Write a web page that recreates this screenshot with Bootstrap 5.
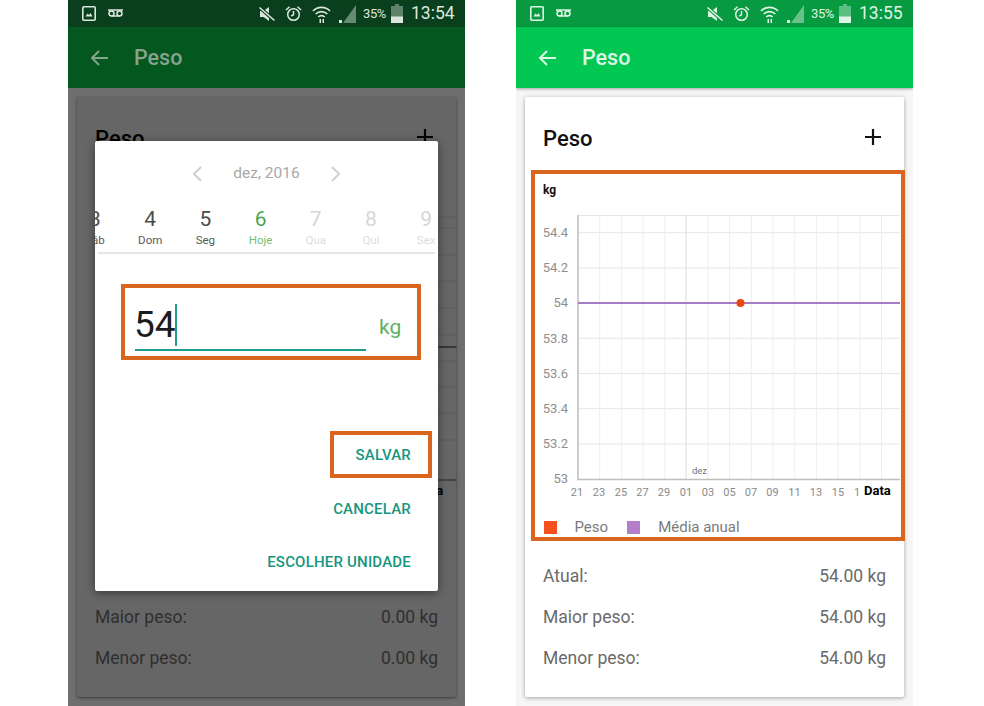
<!DOCTYPE html>
<html lang="pt">
<head>
<meta charset="utf-8">
<title>Peso</title>
<link href="https://cdn.jsdelivr.net/npm/bootstrap@5.3.0/dist/css/bootstrap.min.css" rel="stylesheet">
<style>
html,body{height:706px;overflow:hidden}
body{background:#fff;font-family:Roboto,"Liberation Sans",sans-serif;padding-left:68px;gap:51px}
.fone{width:397px;height:706px;background:#f6f6f6;overflow:hidden}
.fone.escuro{background:#6e6e6e}
.barra-st{height:27px;background:#089a40;color:#dff5e6;padding:0 12px 0 14px}
.escuro .barra-st{background:#0a3f1e;color:#dbe6dd}
.barra-st svg{display:block;flex:none}
.st-vm{margin-left:11px}
.st-al{margin-left:9px}.st-wi{margin-left:10px}.st-si{margin-left:8px}
.st-pc{margin-left:7px;width:25px;font-size:13px;letter-spacing:-.4px;white-space:nowrap}
.st-ba{margin-left:3px}
.st-hr{margin-left:8px;font-size:17.5px;width:42px;white-space:nowrap}
.barra-ap{height:61px;background:#02c753;color:#dcf7e5;padding-left:22px;box-shadow:0 1px 3px rgba(0,0,0,.35)}
.escuro .barra-ap{background:#04571f;color:#86a48d;box-shadow:none}
.barra-ap span{font-size:21.5px;font-weight:500;margin-left:26px;line-height:1}
.cartao{margin:9px 9px 0;height:600px;background:#fff;border:0;border-radius:2px;box-shadow:0 1px 4px rgba(0,0,0,.35);color:#111}
.escuro .cartao{background:#666;color:#000;box-shadow:0 1px 3px rgba(0,0,0,.5)}
.topo{height:73px;padding:29px 22px 0 18px}
.topo b{font-weight:500;font-size:22px;line-height:26px}
.topo svg{margin-top:2px}
.quadro{width:374px;height:371px;margin-left:5.5px;border:4px solid #d9651f;background:#fff}
.escuro .quadro{border-color:transparent;background:transparent}
.quadro svg{display:block;overflow:visible}
.legenda{height:22px;padding:2px 0 0 9px;font-size:15px;color:#7b7b7b}
.qd{width:13px;height:13px;flex:none}
.qd-l{background:#f4511e;margin-right:18px}
.qd-r{background:#b27fc8;margin:0 18px 0 19px}
.dados{padding:15px 18px 0;color:#6a6a6a;font-size:17.5px}
.escuro .dados{color:#2f2f2f}
.linha-d{height:41px}
.eixo{font-family:Roboto,"Liberation Sans",sans-serif}
.dialogo{left:27px;top:141px;width:343px;height:450px;background:#fff;border-radius:2px;box-shadow:0 2px 10px rgba(0,0,0,.45);overflow:hidden}
.mes{height:64px;padding-top:2px;color:#a9a9a9;font-size:15.5px;gap:30px}
.dias{height:47px;margin-left:-27.6px;width:400px}
.dia{width:55.2px;flex:none;text-align:center;color:#5a5a5a;font-size:11.5px;line-height:14px}
.dia i{display:block;font-style:normal;font-size:21px;line-height:28px;color:#4b4b4b}
.dia.hoje{color:#73bf78}.dia.hoje i{color:#46a64d}
.dia.apag{color:#ddd}.dia.apag i{color:#d6d6d6}
.filete{height:2px;margin:0 3px;background:#e6e6e6}
.caixa{border:4px solid #d9651f}
.cx-in{width:300px;height:76px;margin:30px 0 0 26px}
.campo{width:231px;height:63px;margin-left:10px;border-bottom:2px solid #1f9d8a;padding-bottom:3px;flex:none}
.campo span{font-size:37px;line-height:42px;color:#1c1c1c;margin-left:-1px}
.cursor{width:2px;height:42px;background:#1f9d8a;margin-left:-1px}
.kg{font-size:21px;color:#5fb063;margin-left:13px;line-height:26px;padding-bottom:16px}
.cx-sv{width:102px;height:47px;margin:71px 6px 0 auto;padding:2px 17px 0 0}
.acao{color:#17967f;font-size:15px;font-weight:500;letter-spacing:.2px}
.ac-r{height:53px;padding-right:27px}
.ac-r.pri{margin-top:5px}
</style>
</head>
<body class="d-flex m-0">

<!-- Telefone esquerdo -->
<div class="fone escuro position-relative">
  <div class="barra-st d-flex align-items-center">
    <svg width="14" height="15" viewBox="0 0 14 15" fill="none" stroke="currentColor" stroke-width="1.6"><rect x=".8" y=".8" width="12.4" height="13.4" rx="1"/><path d="M3.5 10.5 5.5 7.5 7 9l1.5-2 2 3.5z" fill="currentColor" stroke="none"/></svg>
    <svg class="st-vm" width="17" height="9" viewBox="0 0 17 9" fill="none" stroke="currentColor" stroke-width="1.5"><circle cx="4.5" cy="4.5" r="2.5"/><circle cx="12.5" cy="4.5" r="2.5"/><path d="M4.5 7h8M1 1h15"/></svg>
    <svg class="ms-auto" width="18" height="16" viewBox="0 0 18 16" fill="currentColor"><path d="M2 5h3.5L11 1v14L5.5 11H2z"/><path d="M1 1l16 14" stroke="#0a3f1e" stroke-width="3.5"/><path d="M1.5 1.5l15 13" stroke="currentColor" stroke-width="1.6"/></svg>
    <svg class="st-al" width="17" height="17" viewBox="0 0 17 17" fill="none" stroke="currentColor" stroke-width="1.5"><circle cx="8.5" cy="9.5" r="5.8"/><path d="M8.5 6v3.8l-2.4 1.2M1 5l3.5-3.2M16 5l-3.5-3.2"/></svg>
    <svg class="st-wi" width="19" height="20" viewBox="0 0 19 20" fill="none" stroke="currentColor" stroke-width="1.7"><path d="M1 7a12 12 0 0 1 17 0M3.7 10a8.2 8.2 0 0 1 11.6 0M6.3 13a4.4 4.4 0 0 1 6.4 0"/><path d="M7.5 19v-4h1.5v4zm3 0v-4H12v4z" fill="currentColor" stroke="none"/></svg>
    <svg class="st-si" width="17" height="18" viewBox="0 0 17 18"><path d="M17 0v18H4z" fill="currentColor" opacity=".45"/><rect x="0" y="15" width="3" height="3" fill="currentColor"/></svg>
    <span class="st-pc">35%</span>
    <svg class="st-ba" width="12" height="19" viewBox="0 0 12 19"><path d="M4 0h4v2h4v17H0V2h4z" fill="currentColor" opacity=".4"/><rect y="12.5" width="12" height="6.5" fill="currentColor"/></svg>
    <span class="st-hr">13:54</span>
  </div>
  <div class="barra-ap d-flex align-items-center">
    <svg width="18" height="16" viewBox="0 0 18 16" fill="none" stroke="currentColor" stroke-width="2"><path d="M18 8H2M9 1 2 8l7 7"/></svg>
    <span>Peso</span>
  </div>
  <div class="card cartao">
    <div class="topo d-flex justify-content-between align-items-start">
      <b>Peso</b>
      <svg width="18" height="18" viewBox="0 0 18 18" stroke="currentColor" stroke-width="2.2"><path d="M9 1v16M1 9h16"/></svg>
    </div>
    <div class="quadro">
      <svg width="366" height="341" viewBox="86.5 174 366 341" fill="none">
        <path d="M438 217H456M438 228H456M438 255H456M438 281H456M438 308H456M438 335H456M438 361H456M438 387H456M438 413H456M438 440H456" stroke="#5a5a5a"/>
        <path d="M438 347H456" stroke="#2c2330" stroke-width="1.5"/>
        <path d="M438 480H456" stroke="#3a3a3a" stroke-width="1.5"/>
        <text class="eixo" x="416" y="495" fill="#000" font-size="13" font-weight="700">Data</text>
      </svg>
    </div>
    <div class="dados">
      <div class="linha-d"></div>
      <div class="linha-d d-flex justify-content-between align-items-center"><span>Maior peso:</span><span>0.00 kg</span></div>
      <div class="linha-d d-flex justify-content-between align-items-center"><span>Menor peso:</span><span>0.00 kg</span></div>
    </div>
  </div>

  <div class="dialogo position-absolute d-flex flex-column">
    <div class="mes d-flex align-items-center justify-content-center">
      <svg width="12" height="18" viewBox="0 0 12 18" fill="none" stroke="#cfcfcf" stroke-width="2"><path d="M10 2 3 9l7 7"/></svg>
      <span>dez, 2016</span>
      <svg width="12" height="18" viewBox="0 0 12 18" fill="none" stroke="#cfcfcf" stroke-width="2"><path d="M2 2l7 7-7 7"/></svg>
    </div>
    <div class="dias d-flex">
      <div class="dia"><i>3</i>Sáb</div>
      <div class="dia"><i>4</i>Dom</div>
      <div class="dia"><i>5</i>Seg</div>
      <div class="dia hoje"><i>6</i>Hoje</div>
      <div class="dia apag"><i>7</i>Qua</div>
      <div class="dia apag"><i>8</i>Qui</div>
      <div class="dia apag"><i>9</i>Sex</div>
    </div>
    <div class="filete"></div>
    <div class="caixa cx-in d-flex">
      <div class="campo d-flex align-items-end"><span>54</span><div class="cursor"></div></div>
      <div class="kg align-self-end">kg</div>
    </div>
    <div class="caixa cx-sv acao d-flex align-items-center justify-content-end">SALVAR</div>
    <div class="ac-r pri acao d-flex align-items-center justify-content-end">CANCELAR</div>
    <div class="ac-r acao d-flex align-items-center justify-content-end">ESCOLHER UNIDADE</div>
  </div>
</div>

<!-- Telefone direito -->
<div class="fone">
  <div class="barra-st d-flex align-items-center">
    <svg width="14" height="15" viewBox="0 0 14 15" fill="none" stroke="currentColor" stroke-width="1.6"><rect x=".8" y=".8" width="12.4" height="13.4" rx="1"/><path d="M3.5 10.5 5.5 7.5 7 9l1.5-2 2 3.5z" fill="currentColor" stroke="none"/></svg>
    <svg class="st-vm" width="17" height="9" viewBox="0 0 17 9" fill="none" stroke="currentColor" stroke-width="1.5"><circle cx="4.5" cy="4.5" r="2.5"/><circle cx="12.5" cy="4.5" r="2.5"/><path d="M4.5 7h8M1 1h15"/></svg>
    <svg class="ms-auto" width="18" height="16" viewBox="0 0 18 16" fill="currentColor"><path d="M2 5h3.5L11 1v14L5.5 11H2z"/><path d="M1 1l16 14" stroke="#089a40" stroke-width="3.5"/><path d="M1.5 1.5l15 13" stroke="currentColor" stroke-width="1.6"/></svg>
    <svg class="st-al" width="17" height="17" viewBox="0 0 17 17" fill="none" stroke="currentColor" stroke-width="1.5"><circle cx="8.5" cy="9.5" r="5.8"/><path d="M8.5 6v3.8l-2.4 1.2M1 5l3.5-3.2M16 5l-3.5-3.2"/></svg>
    <svg class="st-wi" width="19" height="20" viewBox="0 0 19 20" fill="none" stroke="currentColor" stroke-width="1.7"><path d="M1 7a12 12 0 0 1 17 0M3.7 10a8.2 8.2 0 0 1 11.6 0M6.3 13a4.4 4.4 0 0 1 6.4 0"/><path d="M7.5 19v-4h1.5v4zm3 0v-4H12v4z" fill="currentColor" stroke="none"/></svg>
    <svg class="st-si" width="17" height="18" viewBox="0 0 17 18"><path d="M17 0v18H4z" fill="currentColor" opacity=".45"/><rect x="0" y="15" width="3" height="3" fill="currentColor"/></svg>
    <span class="st-pc">35%</span>
    <svg class="st-ba" width="12" height="19" viewBox="0 0 12 19"><path d="M4 0h4v2h4v17H0V2h4z" fill="currentColor" opacity=".4"/><rect y="12.5" width="12" height="6.5" fill="currentColor"/></svg>
    <span class="st-hr">13:55</span>
  </div>
  <div class="barra-ap d-flex align-items-center">
    <svg width="18" height="16" viewBox="0 0 18 16" fill="none" stroke="currentColor" stroke-width="2"><path d="M18 8H2M9 1 2 8l7 7"/></svg>
    <span>Peso</span>
  </div>
  <div class="card cartao">
    <div class="topo d-flex justify-content-between align-items-start">
      <b>Peso</b>
      <svg width="18" height="18" viewBox="0 0 18 18" stroke="currentColor" stroke-width="2.2"><path d="M9 1v16M1 9h16"/></svg>
    </div>
    <div class="quadro">
      <svg width="366" height="341" viewBox="535 174 366 341" fill="none">
        <text class="eixo" x="543" y="194" fill="#111" font-size="12" font-weight="700">kg</text>
        <path d="M578 232.7H900M578 267.9H900M578 338.3H900M578 373.5H900M578 408.7H900M578 443.9H900M578 215.5H900" stroke="#e6e6e6"/>
        <path d="M599.7 215V479M621.4 215V479M643.1 215V479M664.8 215V479M707.9 215V479M729.6 215V479M751.3 215V479M773 215V479M794.7 215V479M816.4 215V479M838.1 215V479M859.8 215V479M881.5 215V479" stroke="#eeeeee"/>
        <path d="M686 215V479" stroke="#dcdcdc"/>
        <path d="M578 215V479.5H900" stroke="#bdbdbd" stroke-width="1.5"/>
        <path d="M578 303H900" stroke="#a77cc2" stroke-width="2"/>
        <circle cx="740.5" cy="303" r="4" fill="#e8470f"/>
        <g class="eixo" fill="#8f8f8f" font-size="13" text-anchor="end">
          <text x="568" y="237">54.4</text><text x="568" y="272">54.2</text><text x="568" y="307">54</text><text x="568" y="343">53.8</text><text x="568" y="378">53.6</text><text x="568" y="413">53.4</text><text x="568" y="448">53.2</text><text x="568" y="483">53</text>
        </g>
        <g class="eixo" fill="#8a8a8a" font-size="11" text-anchor="middle">
          <text x="577" y="496">21</text><text x="599" y="496">23</text><text x="621" y="496">25</text><text x="642.5" y="496">27</text><text x="664" y="496">29</text><text x="686" y="496">01</text><text x="708" y="496">03</text><text x="729.5" y="496">05</text><text x="751" y="496">07</text><text x="772.5" y="496">09</text><text x="794.5" y="496">11</text><text x="816" y="496">13</text><text x="838" y="496">15</text><text x="857" y="496">1</text>
        </g>
        <text class="eixo" x="699.5" y="474" fill="#777" font-size="9.5" text-anchor="middle">dez</text>
        <text class="eixo" x="864" y="494.5" fill="#000" font-size="13" font-weight="700">Data</text>
      </svg>
      <div class="legenda d-flex align-items-center">
        <span class="qd qd-l"></span><span>Peso</span><span class="qd qd-r"></span><span>Média anual</span>
      </div>
    </div>
    <div class="dados">
      <div class="linha-d d-flex justify-content-between align-items-center"><span>Atual:</span><span>54.00 kg</span></div>
      <div class="linha-d d-flex justify-content-between align-items-center"><span>Maior peso:</span><span>54.00 kg</span></div>
      <div class="linha-d d-flex justify-content-between align-items-center"><span>Menor peso:</span><span>54.00 kg</span></div>
    </div>
  </div>
</div>

<script src="https://cdn.jsdelivr.net/npm/bootstrap@5.3.0/dist/js/bootstrap.bundle.min.js"></script>
</body>
</html>
